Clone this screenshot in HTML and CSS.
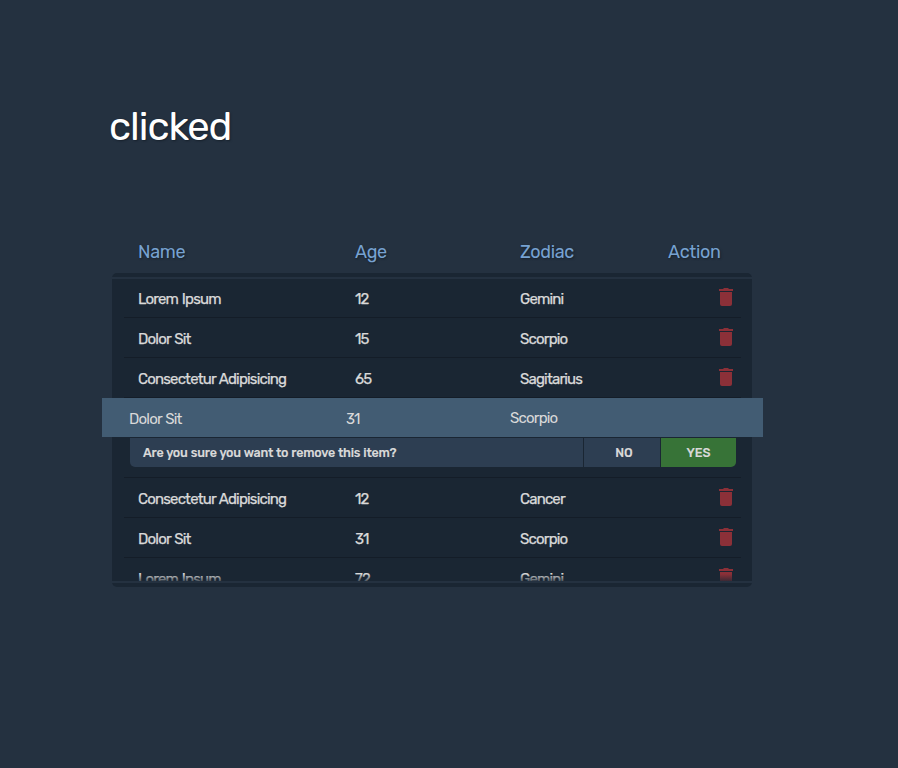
FILE: index.html
```html
<!DOCTYPE html>
<html lang="en">
<head>
<meta charset="utf-8">
<title>clicked</title>
<link rel="stylesheet" href="styles.css">
</head>
<body>
<svg class="defs" width="0" height="0"><symbol id="trash" viewBox="0 0 14 18"><path d="M0 1h4l1-1h4l1 1h4v2H0zM1 4h12v12a2 2 0 0 1-2 2H3a2 2 0 0 1-2-2z"/></symbol></svg>
<main>
<h1>clicked</h1>
<div class="head cols"><span>Name</span><span>Age</span><span>Zodiac</span><span>Action</span></div>
<section class="panel">
<div class="list">
<div class="row first cols"><span>Lorem Ipsum</span><span>12</span><span>Gemini</span><svg class="icon"><use href="#trash"/></svg></div>
<div class="row cols"><span>Dolor Sit</span><span>15</span><span>Scorpio</span><svg class="icon"><use href="#trash"/></svg></div>
<div class="row cols"><span>Consectetur Adipisicing</span><span>65</span><span>Sagitarius</span><svg class="icon"><use href="#trash"/></svg></div>
<div class="open">
<div class="selected"><span>Dolor Sit</span><span>31</span><span class="sign">Scorpio</span></div>
<div class="confirm"><p>Are you sure you want to remove this item?</p><button>NO</button><button class="yes">YES</button></div>
</div>
<div class="row cols"><span>Consectetur Adipisicing</span><span>12</span><span>Cancer</span><svg class="icon"><use href="#trash"/></svg></div>
<div class="row cols"><span>Dolor Sit</span><span>31</span><span>Scorpio</span><svg class="icon"><use href="#trash"/></svg></div>
<div class="last"><div class="row cols"><span>Lorem Ipsum</span><span>72</span><span>Gemini</span><svg class="icon"><use href="#trash"/></svg></div></div>
</div>
</section>
</main>
</body>
</html>
```
FILE: styles.css
```css
* { box-sizing: border-box; }
body { margin: 0; height: 768px; overflow: hidden; background: #243140; color: #d9d9d9; font-family: Rubik, Roboto, sans-serif; }
.defs { display: block; }
main { width: 640px; margin-left: 112px; padding-top: 102px; }
h1 { margin: 0 0 0 -3px; height: 50px; font-size: 40px; line-height: 50px; font-weight: 400; color: #fff; letter-spacing: -1px; text-shadow: 1px 1px 2px #17212c; }
.cols { display: grid; grid-template-columns: 217px 165px 148px 1fr; }
.head { margin-top: 80px; height: 41px; padding-left: 26px; line-height: 40px; font-size: 18px; letter-spacing: -0.3px; color: #77a2d1; text-shadow: 1px 1px 2px #17212c; }
.panel { height: 314px; background: #1a2633; border-radius: 5px; padding: 4px 0; }
.list { height: 306px; border: solid #243140; border-width: 2px 0; padding: 0 11px 0 12px; }
.row { height: 40px; padding-left: 14px; border-bottom: 1px solid #141d28; line-height: 42px; font-size: 15px; letter-spacing: -0.82px; word-spacing: 0.9px; -webkit-text-stroke: 0.25px; }
.icon { width: 14px; height: 18px; margin: 10px 0 0 51px; fill: #8b3038; }
.first { height: 39px; line-height: 40px; }
.first .icon { margin-top: 9px; }
.open { height: 80px; border-bottom: 1px solid #141d28; }
.selected { display: grid; grid-template-columns: 217px 164px 1fr; height: 39px; margin: 0 -22px; padding-left: 27px; background: #425c73; font-size: 15px; letter-spacing: -0.82px; word-spacing: 0.9px; line-height: 42px; }
.sign { line-height: 40px; }
.confirm { display: flex; gap: 1px; width: 606px; height: 29px; margin: 1px 0 0 6px; overflow: hidden; border-radius: 0 0 5px 5px; font-size: 12.5px; font-weight: 500; letter-spacing: -0.2px; word-spacing: 0.4px; line-height: 29px; -webkit-text-stroke: 0.15px; }
.confirm p { width: 453px; margin: 0; padding-left: 13px; background: #2d3e52; }
.confirm button { width: 76px; padding: 0 0 0 4px; border: 0; background: #2d3e52; color: inherit; font: inherit; letter-spacing: 0; }
.confirm .yes { width: 75px; padding: 0; background: #377337; }
.last { position: relative; height: 23px; overflow: hidden; }
.last::after { content: ""; position: absolute; inset: 16px 0 0; background: linear-gradient(#1a263300, #1a2633b3); }
```
